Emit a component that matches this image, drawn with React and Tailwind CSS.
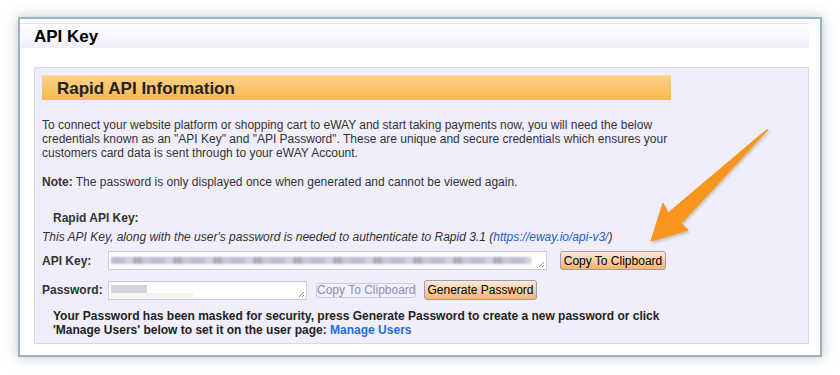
export default function App() {
  return (
    <div className="relative w-[840px] h-[375px] bg-white overflow-hidden font-['Liberation_Sans',Arial,sans-serif] text-[#262626]">
      <div className="ml-[18px] mt-[17px] w-[804px] h-[340px] border-2 border-[#9bb3c0] bg-white shadow-[0_0_12px_rgba(90,130,150,0.45)] pt-[4px] pr-[11px]">
        {/* page header */}
        <div className="h-[25px] border-t border-[#e6e3f2] bg-gradient-to-b from-white to-[#f1eefa] flex items-center pl-[14px]">
          <h1 className="text-[17px] font-bold text-black leading-none">API Key</h1>
        </div>

        {/* panel */}
        <div className="ml-[14px] mt-[19px] h-[277px] border border-[#d6d6ee] bg-[#f0eefb] pl-[7px] pt-[7px]">
          <div className="w-[629px] h-[25px] border-t border-[#fedb9f] bg-gradient-to-b from-[#fccf88] to-[#f9b94b] flex items-center pl-[15px]">
            <h2 className="text-[17px] font-bold text-[#222] leading-none">Rapid API Information</h2>
          </div>

          <p className="mt-[18px] text-[12px] leading-[14px] text-[#333]">
            To connect your website platform or shopping cart to eWAY and start taking payments now, you will need the below
            <br />
            credentials known as an "API Key" and "API Password". These are unique and secure credentials which ensures your
            <br />
            customers card data is sent through to your eWAY Account.
          </p>

          <p className="mt-[15px] text-[12px] leading-[14px] text-[#333]">
            <span className="font-bold">Note:</span> The password is only displayed once when generated and cannot be viewed again.
          </p>

          <h3 className="mt-[22px] pl-[11px] text-[12px] leading-[14px] font-bold text-[#333]">Rapid API Key:</h3>
          <p className="mt-[5px] text-[12px] leading-[14px] italic text-[#333]">
            This API Key, along with the user's password is needed to authenticate to Rapid 3.1 (
            <a className="text-[#1b62c7]">https://eway.io/api-v3/</a>)
          </p>

          {/* api key row */}
          <div className="mt-[7px] flex items-center h-[19px]">
            <label className="w-[66px] text-[12px] font-bold text-[#333]">API Key:</label>
            <div className="relative w-[439px] h-[19px] border border-[#c9cbe3] bg-white flex items-center px-[2px]">
              <div className="w-[420px] h-[7px] blur-[1px] bg-[repeating-linear-gradient(90deg,#bdbccb_0_14px,#d0cfdb_14px_22px,#adacbe_22px_31px,#c6c5d3_31px_40px)]" />
              <Grip />
            </div>
            <button className="ml-[13px] w-[106px] h-[19px] rounded-[3px] border border-[#a29ca8] bg-gradient-to-b from-[#fde9dc] to-[#f9b46a] text-[12px] text-black leading-none whitespace-nowrap">
              Copy To Clipboard
            </button>
          </div>

          {/* password row */}
          <div className="mt-[10px] flex items-center h-[20px]">
            <label className="w-[66px] text-[12px] font-bold text-[#333]">Password:</label>
            <div className="relative w-[199px] h-[19px] border border-[#c9cbe3] bg-white">
              <div className="absolute left-[2px] top-[3px] w-[36px] h-[8px] blur-[0.5px] bg-[#d4d3dd]" />
              <div className="absolute left-[2px] top-[11px] w-[82px] h-[5px] bg-[#f3f3f7]" />
              <Grip />
            </div>
            <button className="ml-[9px] w-[100px] h-[15px] px-0 rounded-[3px] border border-[#c9c9e4] bg-[#f2f1fc] text-[12px] text-[#8b8db0] leading-none whitespace-nowrap">
              Copy To Clipboard
            </button>
            <button className="ml-[8px] w-[113px] h-[20px] rounded-[3px] border border-[#a29ca8] bg-gradient-to-b from-[#fde9dc] to-[#f9b46a] text-[12px] text-black leading-none whitespace-nowrap">
              Generate Password
            </button>
          </div>

          <p className="mt-[9px] pl-[11px] text-[12px] leading-[14px] font-bold text-[#222]">
            Your Password has been masked for security, press Generate Password to create a new password or click
            <br />
            'Manage Users' below to set it on the user page: <a className="text-[#1d6fd8]">Manage Users</a>
          </p>
        </div>
      </div>

      {/* callout arrow */}
      <svg className="absolute left-0 top-0" width="840" height="375" viewBox="0 0 840 375">
        <defs>
          <filter id="sh" x="-20%" y="-20%" width="140%" height="140%">
            <feDropShadow dx="1" dy="2" stdDeviation="1.5" floodColor="#7a5a20" floodOpacity="0.35" />
          </filter>
        </defs>
        <path
          d="M768 129.5 L764.5 131.5 L668 213 L663 203 L651 241 L688 230 L681 223.5 Z"
          fill="#f7951d"
          stroke="#f7951d"
          strokeWidth="1"
          strokeLinejoin="round"
          filter="url(#sh)"
        />
      </svg>
    </div>
  )
}

function Grip() {
  return (
    <svg className="absolute right-[1px] bottom-[1px]" width="7" height="7" viewBox="0 0 7 7">
      <path d="M6 1 L1 6 M6 4 L4 6" stroke="#777" strokeWidth="0.8" />
    </svg>
  )
}
